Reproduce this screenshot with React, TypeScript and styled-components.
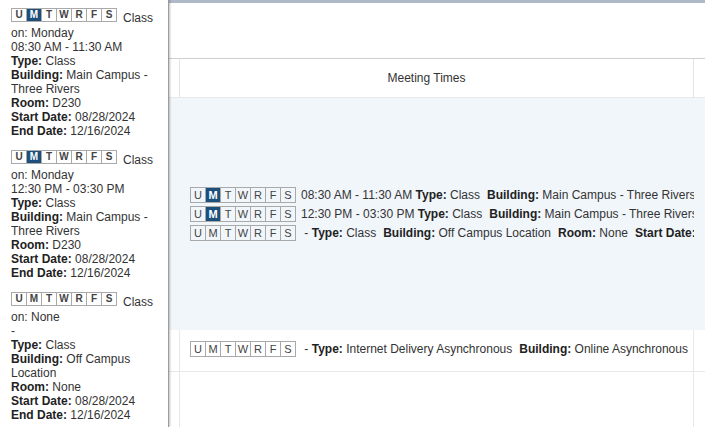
import React from 'react'
import styled, { createGlobalStyle } from 'styled-components'

const GlobalStyle = createGlobalStyle`
	html, body {
		margin: 0;
		padding: 0;
		background: #ffffff;
		overflow: hidden;
	}
	body {
		font-family: "Liberation Sans", Arial, sans-serif;
		color: #333333;
	}
`

const DAYS = ['U', 'M', 'T', 'W', 'R', 'F', 'S']

type Meeting = {
	days: string[]
	on: string
	time: string
	type: string
	building: string
	room: string
	start: string
	end: string
}

const meetings: Meeting[] = [
	{ days: ['M'], on: 'Monday', time: '08:30 AM - 11:30 AM', type: 'Class', building: 'Main Campus - Three Rivers', room: 'D230', start: '08/28/2024', end: '12/16/2024' },
	{ days: ['M'], on: 'Monday', time: '12:30 PM - 03:30 PM', type: 'Class', building: 'Main Campus - Three Rivers', room: 'D230', start: '08/28/2024', end: '12/16/2024' },
	{ days: [], on: 'None', time: '-', type: 'Class', building: 'Off Campus Location', room: 'None', start: '08/28/2024', end: '12/16/2024' },
]

const Page = styled.div`
	position: relative;
	width: 705px;
	height: 427px;
	overflow: hidden;
	background: #ffffff;
`

const TopBar = styled.div`
	height: 3px;
	background: #aebac7;
`

const Toolbar = styled.div`
	height: 55px;
`

const Grid = styled.div`
	display: grid;
	grid-template-columns: 180px 514px 220px;
	width: 914px;
`

const HeadCell = styled.div<{ $first?: boolean }>`
	box-sizing: border-box;
	height: 40px;
	border-top: 1px solid #cfcfcf;
	border-bottom: 1px solid #e6e8ea;
	border-right: 1px solid #e4e4e4;
	display: flex;
	align-items: center;
	justify-content: center;
	padding-right: ${p => (p.$first ? '0' : '20px')};
	font-size: 12px;
	color: #333;
`

const Cell = styled.div<{ $tone: 'hover' | 'plain' | 'empty'; $height: number }>`
	box-sizing: border-box;
	min-width: 0;
	height: ${p => p.$height}px;
	background: ${p => (p.$tone === 'hover' ? '#f1f6fb' : '#ffffff')};
	border-right: ${p => (p.$tone === 'hover' ? 'none' : '1px solid #e8e8e8')};
	border-bottom: ${p => (p.$tone === 'plain' ? '1px solid #e8e8e8' : 'none')};
	padding: ${p => (p.$tone === 'plain' ? '11px 0 0 10px' : '0 0 0 10px')};
	display: flex;
	flex-direction: column;
	justify-content: ${p => (p.$tone === 'hover' ? 'center' : 'flex-start')};
	gap: 3px;
	overflow: hidden;
`

const MeetingLine = styled.div`
	display: flex;
	align-items: center;
	gap: 5px;
	white-space: nowrap;
	font-size: 12px;
	color: #333;
`

const DayStrip = styled.div<{ $small?: boolean }>`
	display: flex;
	flex: none;
	border: 1px solid #a9a9a9;
	height: ${p => (p.$small ? '12px' : '14px')};
`

const DayBox = styled.span<{ $on: boolean; $small?: boolean }>`
	box-sizing: border-box;
	width: 15px;
	height: 100%;
	display: flex;
	align-items: center;
	justify-content: center;
	border-right: 1px solid #a9a9a9;
	font-size: ${p => (p.$small ? '10px' : '11px')};
	font-weight: ${p => (p.$small || p.$on ? 'bold' : 'normal')};
	background: ${p => (p.$on ? '#1d4f7d' : 'transparent')};
	color: ${p => (p.$on ? '#ffffff' : '#444')};
	&:last-child {
		border-right: none;
		width: 14px;
	}
`

const Seg = styled.span`
	margin-left: 7px;
	&:first-of-type {
		margin-left: 0;
	}
`

const B = styled.b`
	font-weight: bold;
	color: #222;
`

const Tip = styled.div`
	position: absolute;
	top: 0;
	left: 0;
	bottom: 0;
	width: 169px;
	box-sizing: border-box;
	padding: 8px 6px 0 11px;
	background: #ffffff;
	border-right: 1px solid #9c9c9c;
	box-shadow: 1px 0 2px rgba(0, 0, 0, 0.25);
	font-size: 12px;
	line-height: 14px;
	color: #333;
`

const TipBlock = styled.div`
	margin-bottom: 12px;
`

const TipFirst = styled.div`
	display: flex;
	align-items: flex-start;
	height: 18px;
`

const TipLabel = styled.span`
	padding-top: 3px;
	margin-left: 6px;
`

const TipLine = styled.div``

const Days = ({ active, small }: { active: string[]; small?: boolean }) => (
	<DayStrip $small={small}>
		{DAYS.map(d => (
			<DayBox key={d} $on={active.includes(d)} $small={small}>{d}</DayBox>
		))}
	</DayStrip>
)

const Row = ({ m }: { m: Meeting }) => (
	<MeetingLine>
		<Days active={m.days} />
		<span>
			<Seg>{m.time === '-' ? '\u00a0-' : m.time} <B>Type:</B> {m.type}</Seg>
			<Seg><B>Building:</B> {m.building}</Seg>
			{m.time === '-' && <Seg><B>Room:</B> {m.room}</Seg>}
			{m.time === '-' && <Seg><B>Start Date:</B> {m.start}</Seg>}
		</span>
	</MeetingLine>
)

const App = () => {
	return (
		<Page>
			<GlobalStyle />
			<TopBar />
			<Toolbar />
			<Grid>
				<HeadCell $first></HeadCell>
				<HeadCell>Meeting Times</HeadCell>
				<HeadCell $first></HeadCell>

				<Cell $tone="hover" $height={232}></Cell>
				<Cell $tone="hover" $height={232}>
					{meetings.map((m, i) => <Row key={i} m={m} />)}
				</Cell>
				<Cell $tone="hover" $height={232}></Cell>

				<Cell $tone="plain" $height={42}></Cell>
				<Cell $tone="plain" $height={42}>
					<MeetingLine>
						<Days active={[]} />
						<span>
							<Seg>{'\u00a0-'} <B>Type:</B> Internet Delivery Asynchronous</Seg>
							<Seg><B>Building:</B> Online Asynchronous</Seg>
							<Seg><B>Room:</B> None</Seg>
						</span>
					</MeetingLine>
				</Cell>
				<Cell $tone="plain" $height={42}></Cell>

				<Cell $tone="empty" $height={80}></Cell>
				<Cell $tone="empty" $height={80}></Cell>
				<Cell $tone="empty" $height={80}></Cell>
			</Grid>

			<Tip>
				{meetings.map((m, i) => (
					<TipBlock key={i}>
						<TipFirst>
							<Days active={m.days} small />
							<TipLabel>Class</TipLabel>
						</TipFirst>
						<TipLine>on: {m.on}</TipLine>
						<TipLine>{m.time}</TipLine>
						<TipLine><B>Type:</B> {m.type}</TipLine>
						<TipLine><B>Building:</B> {m.building}</TipLine>
						<TipLine><B>Room:</B> {m.room}</TipLine>
						<TipLine><B>Start Date:</B> {m.start}</TipLine>
						<TipLine><B>End Date:</B> {m.end}</TipLine>
					</TipBlock>
				))}
			</Tip>
		</Page>
	)
}

export default App
